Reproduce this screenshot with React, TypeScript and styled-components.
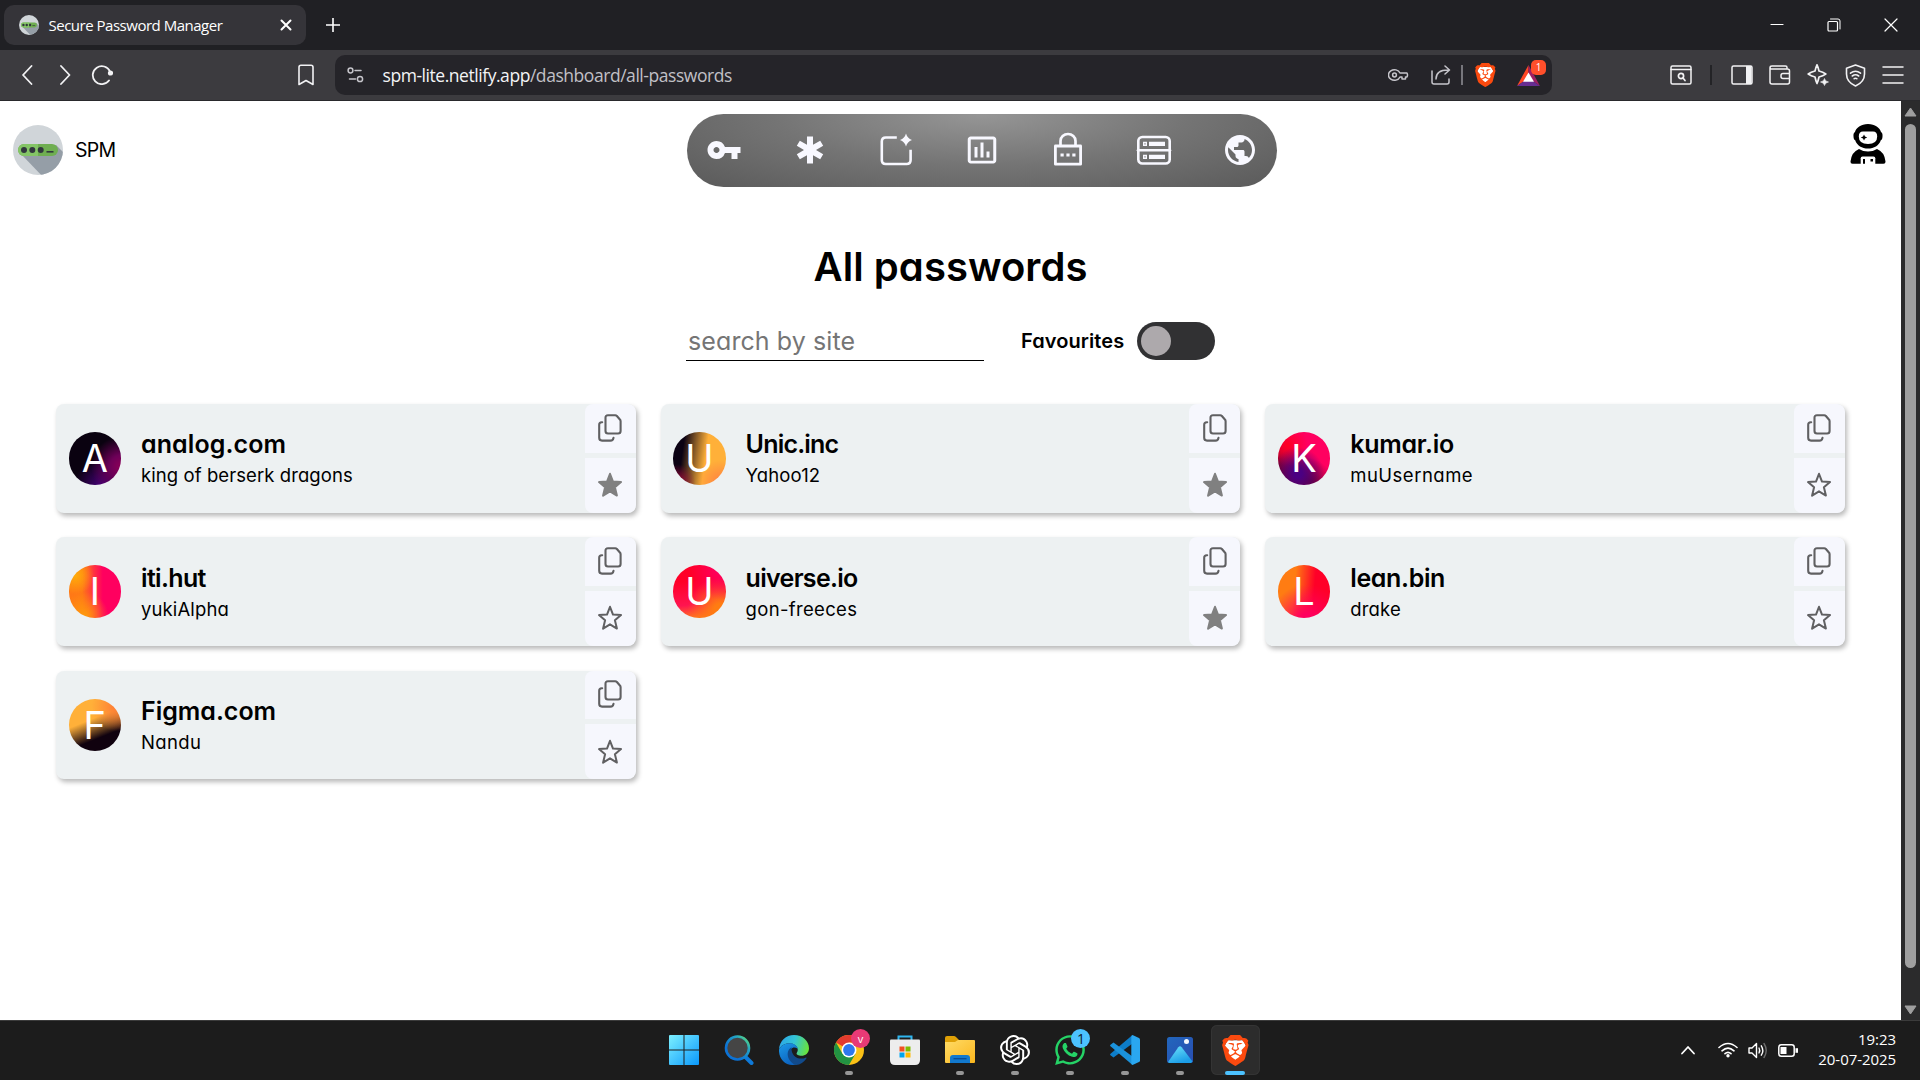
import React from "react";
import styled, { createGlobalStyle } from "styled-components";
import { MdVpnKey, MdEmergency, MdInsertChartOutlined, MdPublic } from "react-icons/md";
import { SiBrave, SiOpenai } from "react-icons/si";
import { FaWhatsapp } from "react-icons/fa";

const GlobalStyle = createGlobalStyle`
  *, *::before, *::after { box-sizing: border-box; }
  body { margin: 0; background: #fff; overflow: hidden; }
  svg { display: block; flex: none; }
`;

const geometric = `Inter, "Open Sans", sans-serif`;
const system = `"Open Sans", "Noto Sans", sans-serif`;

const Screen = styled.div`
  width: 1920px;
  height: 1080px;
  display: flex;
  flex-direction: column;
  overflow: hidden;
`;

/* ---------- browser chrome ---------- */

const TabStrip = styled.div`
  height: 50px;
  background: #202024;
  display: flex;
  align-items: center;
  padding: 0 22px 1px 4px;
  color: #fff;
`;

const Tab = styled.div`
  width: 302px;
  height: 40px;
  border-radius: 10px;
  background: #353439;
  display: flex;
  align-items: center;
  padding: 0 14px 0 15px;
`;

const TabTitle = styled.span`
  flex: 1;
  margin-left: 9.5px;
  font: 400 15px/20px ${system};
  letter-spacing: -0.49px;
  white-space: nowrap;
`;

const NewTab = styled.div`
  margin-left: 20px;
`;

const WindowControls = styled.div`
  margin-left: auto;
  display: flex;
  align-items: center;
  gap: 43px;
`;

const Toolbar = styled.div`
  height: 51px;
  background: #3c3b3f;
  border-bottom: 1px solid #29292c;
  display: flex;
  align-items: center;
  color: #f2f2f4;
  padding: 0 16px 0 19px;
`;

const NavButtons = styled.div`
  display: flex;
  align-items: center;
  gap: 18px;
`;

const BookmarkButton = styled.div`
  margin-left: 184px;
`;

const AddressBar = styled.div`
  width: 1217px;
  height: 40px;
  margin-left: 20px;
  border-radius: 10px;
  background: #252429;
  display: flex;
  align-items: center;
  padding: 0 12px 0 12px;
`;

const Url = styled.div`
  flex: 1;
  margin-left: 18.5px;
  padding-bottom: 1px;
  font: 400 17.5px/24px ${system};
  letter-spacing: -0.45px;
  color: #f4f4f6;
  white-space: nowrap;
`;

const UrlPath = styled.span`
  color: #c1c0c6;
`;

const Divider = styled.div<{ $dark?: boolean }>`
  width: 2px;
  height: 20px;
  background: ${(p) => (p.$dark ? "#232326" : "#77767c")};
`;

const AddressActions = styled.div`
  display: flex;
  align-items: center;
`;

const ShareSlot = styled.div`
  margin: 0 10px 0 22px;
`;

const BraveSlot = styled.div`
  margin: 0 21px 0 12px;
`;

const RewardSlot = styled.div`
  position: relative;
`;

const RewardBadge = styled.span`
  position: absolute;
  left: 14px;
  top: -5px;
  width: 15px;
  height: 15px;
  border-radius: 5px;
  background: #ff4f2b;
  color: #fff;
  font: 400 10px/15px ${system};
  text-align: center;
`;

const ToolbarActions = styled.div`
  margin-left: auto;
  display: flex;
  align-items: center;
  gap: 16px;
`;

const DividerSlot = styled.div`
  margin: 0 3px 0 2px;
`;

/* ---------- page ---------- */

const Viewport = styled.div`
  height: 919px;
  display: flex;
`;

const Page = styled.main`
  flex: 1;
  background: #fff;
  font-family: ${geometric};
  font-feature-settings: "cv11";
  color: #000;
`;

const ScrollTrack = styled.div`
  width: 19px;
  background: #2b2b2c;
  display: flex;
  flex-direction: column;
  align-items: center;
  padding: 6px 0 5px;
`;

const ScrollThumb = styled.div`
  width: 11px;
  height: 844px;
  margin-top: 7px;
  margin-bottom: auto;
  border-radius: 6px;
  background: #9f9f9f;
`;

const Header = styled.header`
  height: 97px;
  display: flex;
  justify-content: space-between;
  padding: 13px 15px 0 13px;
`;

const Brand = styled.div`
  width: 101px;
  height: 71px;
  display: flex;
  align-items: center;
  gap: 12px;
  font-size: 19.5px;
  letter-spacing: -0.7px;
`;

const NavPill = styled.nav`
  width: 590px;
  height: 73px;
  border-radius: 37px;
  background: radial-gradient(ellipse at 50% 0%, #969696 0%, #747474 50%, #5a5a5a 100%);
  color: #f8f8ff;
  display: flex;
  align-items: center;
  justify-content: space-between;
  padding: 0 19px 1px;
`;

const ProfileSlot = styled.div`
  padding-top: 10px;
`;

const Heading = styled.h1`
  margin: 39px 0 0;
  font-size: 40px;
  font-weight: 600;
  line-height: 60px;
  letter-spacing: 0.05px;
  text-align: center;
`;

const Filters = styled.div`
  display: flex;
  align-items: center;
  justify-content: center;
  height: 40px;
  margin-top: 24px;
`;

const SearchField = styled.input`
  width: 298px;
  height: 40px;
  border: 0;
  border-bottom: 1px solid #000;
  padding: 1px 2px 0;
  outline: none;
  background: transparent;
  font: 400 25px/36px ${geometric};
  font-feature-settings: "cv11";
  letter-spacing: 0.1px;
  &::placeholder { color: #757575; }
`;

const FavouriteLabel = styled.span`
  width: 116px;
  margin-left: 37px;
  font-size: 20px;
  font-weight: 600;
  letter-spacing: 0.08px;
`;

const Toggle = styled.div`
  width: 78px;
  height: 38px;
  border-radius: 19px;
  background: #313133;
  padding: 4px;
`;

const ToggleKnob = styled.div`
  width: 30px;
  height: 30px;
  border-radius: 50%;
  background: #ada9ac;
`;

const Grid = styled.section`
  display: grid;
  grid-template-columns: repeat(3, 1fr);
  grid-auto-rows: 108.5px;
  gap: 24.8px;
  padding: 0 56px;
  margin-top: 43px;
`;

const Card = styled.article`
  display: flex;
  align-items: center;
  border-radius: 8px;
  background: #edf1f2;
  box-shadow: 2px 3px 5px rgba(0, 0, 0, 0.28);
  overflow: hidden;
  padding-left: 12.5px;
`;

const Avatar = styled.div<{ $fill: string }>`
  width: 52.5px;
  height: 52.5px;
  border-radius: 50%;
  background: ${(p) => p.$fill};
  color: #fff;
  font-size: 38px;
  line-height: 53px;
  text-align: center;
`;

const CardText = styled.div`
  flex: 1;
  margin-left: 20px;
  padding-top: 2px;
`;

const Site = styled.div<{ $tracking: number }>`
  font-size: 25px;
  line-height: 32px;
  font-weight: 600;
  letter-spacing: ${(p) => p.$tracking}px;
`;

const Username = styled.div<{ $tracking: number }>`
  font-size: 18.5px;
  line-height: 30px;
  letter-spacing: ${(p) => p.$tracking}px;
`;

const CardActions = styled.div`
  width: 51px;
  height: 100%;
  display: flex;
  flex-direction: column;
  gap: 5px;
`;

const ActionCell = styled.div<{ $height: number; $corner: string }>`
  height: ${(p) => p.$height}px;
  border-radius: ${(p) => p.$corner};
  background: #f6f7fd;
  color: #606062;
  display: flex;
  align-items: center;
  justify-content: center;
`;

/* ---------- taskbar ---------- */

const Taskbar = styled.footer`
  height: 60px;
  background: #1c1c1c;
  border-top: 1px solid #3b3b3b;
  display: flex;
  align-items: center;
  padding: 0 24px 1px 659.5px;
  color: #fff;
`;

const Apps = styled.div`
  display: flex;
  gap: 6.15px;
`;

const AppTile = styled.div<{ $active?: boolean }>`
  position: relative;
  width: 49px;
  height: 50px;
  border-radius: 6px;
  display: flex;
  align-items: center;
  justify-content: center;
  background: ${(p) => (p.$active ? "#2c2c2c" : "transparent")};
  box-shadow: ${(p) => (p.$active ? "inset 0 0 0 1px #343434" : "none")};
`;

const RunningMark = styled.i<{ $active?: boolean }>`
  position: absolute;
  left: 50%;
  bottom: 0;
  width: ${(p) => (p.$active ? 20 : 8)}px;
  height: 4px;
  border-radius: 2px;
  transform: translateX(-50%);
  background: ${(p) => (p.$active ? "#4cc2ff" : "#969696")};
`;

const AppBadge = styled.span<{ $color: string; $ink: string; $size: number }>`
  position: absolute;
  left: 26px;
  top: 4px;
  width: 19px;
  height: 19px;
  border-radius: 50%;
  background: ${(p) => p.$color};
  color: ${(p) => p.$ink};
  font: 400 ${(p) => p.$size}px/19px ${system};
  text-align: center;
`;

const Tray = styled.div`
  margin-left: auto;
  display: flex;
  align-items: center;
  gap: 10px;
`;

const CaretSlot = styled.div`
  margin-right: 12px;
`;

const Clock = styled.div`
  width: 88px;
  padding-bottom: 3px;
  text-align: right;
  font: 400 15px/20px ${system};
  letter-spacing: -0.06px;
`;

/* ---------- icons ---------- */

const Logo = ({ size }: { size: number }) => (
  <svg width={size} height={size} viewBox="0 0 50 50">
    <clipPath id={`disc${size}`}><circle cx="25" cy="25" r="25" /></clipPath>
    <g clipPath={`url(#disc${size})`}>
      <rect width="50" height="50" fill="#d0d5d9" />
      <path d="M8 29 L43 20 L54 31 V54 H32 Z" fill="#959ea7" />
      <rect x="5" y="19" width="40" height="12" rx="6" fill="#6fae51" />
      <path d="M25 19H11a6 6 0 0 0 0 12h14z" fill="#84c566" />
      <g fill="#31373d">
        <circle cx="11" cy="25" r="3" /><circle cx="19.300" cy="25" r="3" /><circle cx="27.700" cy="25" r="3" />
        <rect x="33.500" y="26" width="7" height="1.600" />
      </g>
    </g>
  </svg>
);

const stroke = (w: number) => ({
  fill: "none", stroke: "currentColor", strokeWidth: w,
  strokeLinecap: "round" as const, strokeLinejoin: "round" as const,
});

const NewItemIcon = () => (
  <svg width="36" height="36" viewBox="0 0 36 36">
    <path d="M18.500 5.800H7.500q-4 0-4 4v18.500q0 4 4 4h20.800q4 0 4-4V18" transform="translate(0.300 -0.300)" {...stroke(2.6)} strokeLinecap="butt" />
    <path d="M28 1.500q1.300 4.800 6 6.500q-4.700 1.700-6 6.500q-1.300-4.800-6-6.500q4.700-1.700 6-6.500z" fill="currentColor" />
  </svg>
);

const PasswordLockIcon = () => (
  <svg width="36" height="36" viewBox="0 0 36 36">
    <path d="M10.500 13V9a7.500 7 0 0 1 15 0V13" {...stroke(2.7)} />
    <rect x="5.400" y="14" width="25.200" height="18.200" {...stroke(2.8)} />
    <path d="M10.500 21.500h3.200v3h-3.200zM16.400 21.500h3.200v3h-3.200zM22.300 21.500h3.200v3h-3.200z" fill="currentColor" />
  </svg>
);

const ServerIcon = () => (
  <svg width="36" height="36" viewBox="0 0 36 36">
    <rect x="2.300" y="5" width="31.400" height="26.500" rx="4" {...stroke(2.6)} />
    <path d="M2 18.300h32" {...stroke(2.6)} />
    <path d="M7 9.700h4v4.300h-4zM7 22.700h4v4.300h-4z" fill="currentColor" />
    <path d="M13 9.700h16v4.300h-16zM13 22.700h16v4.300h-16z" fill="currentColor" />
    <path d="M8.400 11.200h1.200v1.300h-1.200zM8.400 24.200h1.200v1.300h-1.200z" fill="#777" />
  </svg>
);

const AstronautIcon = () => (
  <svg width="36" height="40" viewBox="0 0 36 40">
    <path d="M18 0C11 0 6 4 5 8C3.600 8.500 3.300 10.500 3.500 12.500C3.600 14.500 4 15.700 5.200 16.200C7 21.500 12 24.500 18 24.500s11-3 12.800-8.300C32 15.700 32.400 14.500 32.500 12.500C32.700 10.500 32.400 8.500 31 8C30 4 25 0 18 0z" />
    <path d="M13 7.500h10q4.200 0 4.200 5q0 7.500-9.200 7.500t-9.200-7.500q0-5 4.200-5z" fill="#fff" />
    <path d="M14 10.500l1 2 2.200 1-2.200 1-1 2-1-2-2.200-1 2.200-1z" />
    <path d="M9 25Q13 27.500 18 27.500t9-2.500Q34.500 28 35.500 37.500Q35.700 39.700 33.500 39.700H2.500Q.3 39.700.5 37.500Q1.500 28 9 25z" />
    <path d="M12.500 32.500h11q1.800 0 1.800 1.800V40H10.700v-5.700q0-1.800 1.800-1.800z" fill="#fff" />
    <path d="M13 35h2v4.700h-2zM20.500 35h2.500v2.500h-2.500z" />
  </svg>
);

const CopyIcon = () => (
  <svg width="24" height="29" viewBox="0 0 24 29">
    <path d="M10 1.200h7.200q1 0 1.700.8l3 3.500q.7.700.7 1.700v9.800q0 2.500-2.500 2.500H10q-2.500 0-2.500-2.500v-13.300q0-2.500 2.500-2.500z" {...stroke(2.1)} />
    <path d="M4.200 8.300h-.5q-2.500 0-2.500 2.500v13q0 2.800 2.800 2.800h8.500q2.600 0 3-2.800" {...stroke(2.1)} />
  </svg>
);

const StarIcon = ({ filled }: { filled: boolean }) => (
  <svg width="26" height="26" viewBox="0 0 26 26">
    <path
      d="M13 1.800L16 9.600L24 10.100L17.900 15.300L19.900 23.600L13 19.300L6.100 23.600L8.100 15.300L2 10.100L10 9.600Z"
      fill={filled ? "#808080" : "none"}
      stroke={filled ? "#808080" : "#606062"}
      strokeWidth="2"
      strokeLinejoin="round"
    />
  </svg>
);

const BraveMark = ({ size }: { size: number }) => (
  <svg width={size * 0.86} height={size} viewBox="1.700 0 20.600 24">
    <path d="M6 4L18 4L20 8L18 17L12 22L6 17L4 8Z" fill="#fff" />
    <SiBrave width="24" height="24" size={24} color="#fb4a0f" />
  </svg>
);

const RewardTriangle = () => (
  <svg width="23" height="21" viewBox="0 0 23 21">
    <path d="M11.500 0L0 21L11.500 13z" fill="#ff4724" />
    <path d="M11.500 0L23 21L11.500 13z" fill="#9e1f63" />
    <path d="M0 21H23L11.500 13z" fill="#662d91" />
    <path d="M11.500 7.500L17 16.800H6z" fill="#fff" />
  </svg>
);

const WindowsIcon = () => (
  <svg width="30" height="30" viewBox="0 0 30 30">
    <defs><linearGradient id="win" x1="0" y1="0" x2="1" y2="1"><stop stopColor="#7df0ff" /><stop offset="1" stopColor="#0a98fb" /></linearGradient></defs>
    <path d="M1 0h13.500v14.500H0V1q0-1 1-1zM15.500 0H29q1 0 1 1v13.500H15.500zM0 15.500h14.500V30H1q-1 0-1-1zM15.500 15.500H30V29q0 1-1 1H15.500z" fill="url(#win)" />
  </svg>
);

const SearchIcon = () => (
  <svg width="30" height="30" viewBox="0 0 30 30">
    <defs><linearGradient id="lens" x1="1" y1="0" x2="0.300" y2="0.700"><stop stopColor="#6bea66" /><stop offset=".4" stopColor="#23a3c4" /><stop offset="1" stopColor="#0c72d4" /></linearGradient></defs>
    <path d="M21.500 22L27.500 28" stroke="#0f7ad9" strokeWidth="4" strokeLinecap="round" />
    <circle cx="13.500" cy="13" r="11.500" fill="#454545" stroke="url(#lens)" strokeWidth="2.600" />
  </svg>
);

const EdgeIcon = () => (
  <svg width="30" height="30" viewBox="0 0 24 24">
    <defs>
      <linearGradient id="edgeTop" x1="0" y1="0.300" x2="1" y2="0.500"><stop stopColor="#2ba5e8" /><stop offset=".5" stopColor="#34c5d5" /><stop offset="1" stopColor="#68e33c" /></linearGradient>
      <linearGradient id="edgeLeft" x1="0" y1="0" x2="0.500" y2="1"><stop stopColor="#1c9ae8" /><stop offset="1" stopColor="#0c63c0" /></linearGradient>
    </defs>
    <path d="M0 11.500C.5 4.500 5.500 0 12 0c7 0 12 5 12 10.500 0 4-3 6-6 6-2.500 0-4.200-1-3.900-2 .3-.7.900-1.200.9-2.700C15 9 12 6.500 8.500 6.500 4.500 6.500 1.500 8.500 0 11.500z" fill="url(#edgeTop)" />
    <path d="M0 11.500C1.500 8.500 4.500 6.500 8.500 6.500c3.500 0 6.200 2 6.500 4.500-4-2.500-6.500.5-6.300 4 .3 4.500 3.300 7.500 7 8C6.500 26.500-.5 20 0 11.500z" fill="url(#edgeLeft)" />
    <path d="M10 9.700C5.500 12 5.500 20.500 13.500 23.900c3.600-.2 6.500-2.200 8.400-5.200.3-.6-.2-.9-.7-.6-5.200 2.400-11.800-1-11.200-8.400z" fill="#114a8b" />
  </svg>
);

const ChromeIcon = () => (
  <svg width="30" height="30" viewBox="0 0 30 30">
    <circle cx="15" cy="15" r="15" fill="#fbc116" />
    <path d="M15 15L2 7.500A15 15 0 0 1 28 7.500H15z" fill="#e33b2e" />
    <path d="M2 7.500A15 15 0 0 0 15 30L21.500 18.700L15 15L8.500 18.700z" fill="#229342" />
    <circle cx="15" cy="15" r="7.500" fill="#fff" /><circle cx="15" cy="15" r="5.900" fill="#2f78ed" />
  </svg>
);

const StoreIcon = () => (
  <svg width="30" height="30" viewBox="0 0 30 30">
    <path d="M8.500 6V1.500h13V6" fill="none" stroke="#2fb5ee" strokeWidth="2" />
    <path d="M0 5.500q0-1 1-1h28q1 0 1 1V25q0 5-5 5H5q-5 0-5-5z" fill="#ededed" />
    <path d="M9.500 11.500h5v5h-5z" fill="#f25022" /><path d="M15.500 11.500h5v5h-5z" fill="#7fba00" />
    <path d="M9.500 17.500h5v5h-5z" fill="#00a4ef" /><path d="M15.500 17.500h5v5h-5z" fill="#ffb900" />
  </svg>
);

const FolderIcon = () => (
  <svg width="30" height="28" viewBox="0 0 30 28">
    <defs><linearGradient id="folder" x1="0" y1="0" x2="1" y2="1"><stop stopColor="#ffdb66" /><stop offset="1" stopColor="#fab61d" /></linearGradient></defs>
    <path d="M0 2q0-2 2-2h7q1 0 2 1l3 3v4H0z" fill="#dfa006" />
    <path d="M0 6h10l3-2h16q1 0 1 1v21q0 1-1 1H1q-1 0-1-1z" fill="url(#folder)" />
    <path d="M5 27v-5q0-3 3-3h14q3 0 3 3v5z" fill="#1279ce" /><path d="M8.500 22.700h13" stroke="#0a4a93" strokeWidth="1.300" />
  </svg>
);

const CodeIcon = () => (
  <svg width="30" height="30" viewBox="0 0 30 30">
    <path d="M22.500 0v8.500L3.500 22.500L.5 20.300q-.8-.8 0-1.600z" fill="#0d7dc9" />
    <path d="M22.500 30v-8.500L3.500 7.500L.5 9.700q-.8.800 0 1.600z" fill="#1b92db" />
    <path d="M22.500 0L29 3q1 .5 1 1.600v20.800q0 1.100-1 1.600L22.500 30q-1.200-.3-1.200-2V2q0-1.700 1.200-2z" fill="#2aa7f0" />
  </svg>
);

const PhotosIcon = () => (
  <svg width="26" height="26" viewBox="0 0 26 26">
    <defs>
      <linearGradient id="sky" x1="0" y1="0" x2="1" y2="1"><stop stopColor="#2267bd" /><stop offset="1" stopColor="#294db0" /></linearGradient>
      <linearGradient id="hill" x1="0" y1="0" x2=".5" y2="1"><stop stopColor="#6fe5fb" /><stop offset="1" stopColor="#1b9de7" /></linearGradient>
    </defs>
    <rect width="26" height="26" rx="2.500" fill="url(#sky)" />
    <path d="M1 25L11.300 10.200q1.700-2 3.400 0L25.500 24.500L24 26H2z" fill="url(#hill)" />
    <circle cx="19.500" cy="4.500" r="2.500" fill="#f4f8fc" />
  </svg>
);

const WifiIcon = () => (
  <svg width="20" height="16" viewBox="0 0 20 16">
    <path d="M1 5.500Q10-2.500 19 5.500M4 8.800Q10 3.300 16 8.800M7 11.700Q10 9 13 11.700" {...stroke(1.600)} /><circle cx="10" cy="13.800" r="1.700" fill="currentColor" />
  </svg>
);

const VolumeIcon = () => (
  <svg width="20" height="17" viewBox="0 0 20 17">
    <path d="M1 6h3l4.500-4.500v14L4 11H1z" {...stroke(1.400)} /><path d="M11 6q1.500 2.500 0 5M13.300 3.800q3 4.700 0 9.400" {...stroke(1.400)} /><path d="M16 1.500q4.500 7 0 14" {...stroke(1.400)} opacity=".35" />
  </svg>
);

const BatteryIcon = () => (
  <svg width="20" height="13" viewBox="0 0 20 13">
    <rect x=".8" y=".8" width="15.400" height="11.400" rx="2.500" {...stroke(1.500)} /><rect x="2.500" y="3" width="6" height="7" fill="currentColor" /><path d="M17.500 4.200h2.500v4.600h-2.500z" fill="currentColor" />
  </svg>
);

/* ---------- data ---------- */

type Entry = { site: string; user: string; letter: string; fav: boolean; fill: string; st: number; ut: number };

const entries: Entry[] = [
  { site: "analog.com", user: "king of berserk dragons", letter: "A", fav: true, st: 0.1, ut: 0.08,
    fill: "radial-gradient(circle at 100% 65%, #8c0058 0%, #6d0058 18%, transparent 48%), radial-gradient(circle at 65% 105%, #4b0082 0%, transparent 45%), #0a0210" },
  { site: "Unic.inc", user: "Yahoo12", letter: "U", fav: true, st: -0.8, ut: 0.12,
    fill: "radial-gradient(circle at 8% 95%, #a0083c 0%, #a0083c00 26%), radial-gradient(circle at 90% 95%, #ff8042 0%, #ff804200 32%), linear-gradient(98deg, #0b0213 20%, #ffb039 60%)" },
  { site: "kumar.io", user: "muUsername", letter: "K", fav: false, st: -0.25, ut: 0.5,
    fill: "radial-gradient(circle at 38% 78%, #4b0082 8%, #4b008200 50%), radial-gradient(circle at 18% 25%, #ff0022 0%, #ff002200 35%), radial-gradient(circle at 50% 105%, #6e0030 15%, #6e003000 50%), linear-gradient(50deg, #6e0018 12%, #ff0060 52%)" },
  { site: "iti.hut", user: "yukiAlpha", letter: "I", fav: false, st: -0.65, ut: 0.12,
    fill: "radial-gradient(circle at 12% 20%, #ffac0a 0%, #ffac0a00 30%), radial-gradient(circle at 30% 95%, #ff990c 0%, #ff990c00 38%), linear-gradient(90deg, #ff7816 25%, #ff005f 65%)" },
  { site: "uiverse.io", user: "gon-freeces", letter: "U", fav: true, st: -0.7, ut: 0.33,
    fill: "radial-gradient(circle at 90% 8%, #ff0064 0%, #ff006400 45%), radial-gradient(circle at 90% 85%, #ff7c12 10%, #ff7c1200 50%), linear-gradient(175deg, #ff0028 30%, #ff1450 72%, #ff7520 95%)" },
  { site: "lean.bin", user: "drake", letter: "L", fav: false, st: -0.35, ut: 0.2,
    fill: "radial-gradient(circle at 55% 105%, #ff005f 10%, #ff005f00 58%), linear-gradient(95deg, #ff7c12 32%, #ff0028 68%)" },
  { site: "Figma.com", user: "Nandu", letter: "F", fav: false, st: -0.02, ut: 0.35,
    fill: "radial-gradient(circle at 90% 15%, #ff7d35 0%, #ff7d3500 38%), linear-gradient(158deg, #ffb039 40%, #10020f 70%)" },
];

const PasswordCard = ({ entry }: { entry: Entry }) => (
  <Card>
    <Avatar $fill={entry.fill}>{entry.letter}</Avatar>
    <CardText>
      <Site $tracking={entry.st}>{entry.site}</Site>
      <Username $tracking={entry.ut}>{entry.user}</Username>
    </CardText>
    <CardActions>
      <ActionCell $height={49} $corner="8px 8px 0 0"><CopyIcon /></ActionCell>
      <ActionCell $height={55} $corner="0 0 8px 8px"><StarIcon filled={entry.fav} /></ActionCell>
    </CardActions>
  </Card>
);

const App: React.FC = () => (
  <Screen>
    <GlobalStyle />
    <TabStrip>
      <Tab>
        <Logo size={20} />
        <TabTitle>Secure Password Manager</TabTitle>
        <svg width="12" height="12" viewBox="0 0 12 12"><path d="M1.500 1.500l9 9M10.500 1.500l-9 9" {...stroke(2)} /></svg>
      </Tab>
      <NewTab><svg width="14" height="14" viewBox="0 0 14 14"><path d="M7 0v14M0 7h14" {...stroke(1.600)} /></svg></NewTab>
      <WindowControls>
        <svg width="14" height="14" viewBox="0 0 14 14"><path d="M1 6.500h12" {...stroke(1.200)} /></svg>
        <svg width="14" height="14" viewBox="0 0 14 14"><path d="M3.500 1h7.500q2 0 2 2v8" {...stroke(1)} /><rect x="1" y="3.500" width="9.500" height="9.500" rx="1" {...stroke(1.200)} /></svg>
        <svg width="14" height="14" viewBox="0 0 14 14"><path d="M1 1l12 12M13 1L1 13" {...stroke(1.200)} /></svg>
      </WindowControls>
    </TabStrip>
    <Toolbar>
      <NavButtons>
        <svg width="18" height="20" viewBox="0 0 18 20"><path d="M12.500 1L4 10l8.500 9" {...stroke(1.800)} /></svg>
        <svg width="18" height="20" viewBox="0 0 18 20"><path d="M6 1l8.500 9L6 19" {...stroke(1.800)} /></svg>
        <svg width="22" height="20" viewBox="0 0 22 20"><path d="M18 15.500A9 9 0 1 1 19 6.500" {...stroke(1.800)} /><circle cx="19.500" cy="8" r="2.600" fill="currentColor" /></svg>
      </NavButtons>
      <BookmarkButton>
        <svg width="18" height="22" viewBox="0 0 18 22"><path d="M4 1.200h10q2 0 2 2V20.500L9 16.500L2 20.500V3.200q0-2 2-2z" {...stroke(1.600)} /></svg>
      </BookmarkButton>
      <AddressBar>
        <svg width="17" height="16" viewBox="0 0 17 16" color="#c6c5cb">
          <circle cx="3.500" cy="3.500" r="2.400" {...stroke(1.500)} /><circle cx="13" cy="12" r="2.600" {...stroke(1.500)} /><path d="M8 3.500h6M2.500 12h6" {...stroke(1.500)} />
        </svg>
        <Url>spm-lite.netlify.app<UrlPath>/dashboard/all-passwords</UrlPath></Url>
        <AddressActions>
          <svg width="21" height="14" viewBox="0 0 21 14" color="#c6c5cb"><path d="M12 5a6 5.300 0 1 0 0 4h2v2h3.500V9h1.500q1-2 0-4z" {...stroke(1.500)} /><circle cx="6.500" cy="7" r="1.900" {...stroke(1.500)} /></svg>
          <ShareSlot><svg width="20" height="20" viewBox="0 0 20 20" color="#c6c5cb"><path d="M1 6v11q0 2 2 2h13q2 0 2-2v-3M5 14q0-9 12-9M14 1l4.500 4L14 9" {...stroke(1.500)} /></svg></ShareSlot>
          <Divider />
          <BraveSlot><BraveMark size={24} /></BraveSlot>
          <RewardSlot><RewardTriangle /><RewardBadge>1</RewardBadge></RewardSlot>
        </AddressActions>
      </AddressBar>
      <ToolbarActions>
        <svg width="22" height="20" viewBox="0 0 22 20"><rect x="1" y="1" width="20" height="18" rx="1.500" {...stroke(1.500)} /><path d="M1 4.500h20" {...stroke(1.400)} /><circle cx="11" cy="11" r="2.600" {...stroke(1.700)} /><path d="M13 13l2 2.500" {...stroke(1.700)} /></svg>
        <DividerSlot><Divider $dark /></DividerSlot>
        <svg width="22" height="20" viewBox="0 0 22 20"><rect x="1" y="1" width="20" height="18" rx="1.500" {...stroke(1.500)} /><path d="M15 1h5.500v18H15z" fill="currentColor" /></svg>
        <svg width="22" height="20" viewBox="0 0 22 20"><path d="M18 4V2.500q0-1.500-1.500-1.500H3Q1 1 1 2.700V17q0 2 2 2h15.500q2 0 2-2V6q0-2-2-2H3Q1 4 1 2.700M20.500 8.500H14q-2 0-2 2v1q0 2 2 2h6.500" {...stroke(1.500)} /></svg>
        <svg width="22" height="22" viewBox="0 0 22 22"><path d="M10 .8q1.300 2.700 2 6.200q4 1 6.800 3q-2.800 2-6.800 3q-.7 3.500-2 6.500q-1.300-3-2-6.500q-4-1-6.800-3q2.800-2 6.800-3q.7-3.500 2-6.200z" {...stroke(1.700)} /><path d="M17.500 14.500q.6 3 4 3.500q-3.400.5-4 3.500q-.6-3-4-3.500q3.400-.5 4-3.500z" fill="currentColor" stroke="currentColor" strokeWidth=".6" /></svg>
        <svg width="21" height="23" viewBox="0 0 21 23"><path d="M10.500 1L19.500 4.300V10q0 8-9 12Q1.500 18 1.500 10V4.300z" {...stroke(1.600)} /><path d="M5.500 9.200q5-4 10 0M7.300 12q3.200-2.500 6.400 0M9.200 14.700q1.300-1 2.600 0" {...stroke(1.600)} /></svg>
        <svg width="22" height="20" viewBox="0 0 22 20"><path d="M1 2h20M1 10h20M1 18h20" {...stroke(1.500)} /></svg>
      </ToolbarActions>
    </Toolbar>

    <Viewport>
      <Page>
        <Header>
          <Brand><Logo size={50} />SPM</Brand>
          <NavPill>
            <MdVpnKey size={36} />
            <MdEmergency size={36} />
            <NewItemIcon />
            <MdInsertChartOutlined size={36} />
            <PasswordLockIcon />
            <ServerIcon />
            <MdPublic size={36} />
          </NavPill>
          <ProfileSlot><AstronautIcon /></ProfileSlot>
        </Header>
        <Heading>All passwords</Heading>
        <Filters>
          <SearchField placeholder="search by site" />
          <FavouriteLabel>Favourites</FavouriteLabel>
          <Toggle><ToggleKnob /></Toggle>
        </Filters>
        <Grid>
          {entries.map((entry) => <PasswordCard key={entry.site} entry={entry} />)}
        </Grid>
      </Page>
      <ScrollTrack>
        <svg width="13" height="10" viewBox="0 0 13 10"><path d="M6.500 1L12 9H1z" fill="#9f9f9f" stroke="#9f9f9f" strokeLinejoin="round" /></svg>
        <ScrollThumb />
        <svg width="13" height="10" viewBox="0 0 13 10"><path d="M6.500 9L12 1H1z" fill="#9f9f9f" stroke="#9f9f9f" strokeLinejoin="round" /></svg>
      </ScrollTrack>
    </Viewport>

    <Taskbar>
      <Apps>
        <AppTile><WindowsIcon /></AppTile>
        <AppTile><SearchIcon /></AppTile>
        <AppTile><EdgeIcon /></AppTile>
        <AppTile><ChromeIcon /><AppBadge $color="#e83a76" $ink="#fff" $size={11}>v</AppBadge><RunningMark /></AppTile>
        <AppTile><StoreIcon /></AppTile>
        <AppTile><FolderIcon /><RunningMark /></AppTile>
        <AppTile><SiOpenai size={30} /><RunningMark /></AppTile>
        <AppTile><FaWhatsapp size={34} color="#25d366" /><AppBadge $color="#4cc2ff" $ink="#10202b" $size={14}>1</AppBadge><RunningMark /></AppTile>
        <AppTile><CodeIcon /><RunningMark /></AppTile>
        <AppTile><PhotosIcon /><RunningMark /></AppTile>
        <AppTile $active><BraveMark size={31} /><RunningMark $active /></AppTile>
      </Apps>
      <Tray>
        <CaretSlot><svg width="16" height="10" viewBox="0 0 16 10"><path d="M2 8.500L8 2l6 6.500" {...stroke(1.800)} /></svg></CaretSlot>
        <WifiIcon />
        <VolumeIcon />
        <BatteryIcon />
        <Clock>19:23<br />20-07-2025</Clock>
      </Tray>
    </Taskbar>
  </Screen>
);

export default App;
